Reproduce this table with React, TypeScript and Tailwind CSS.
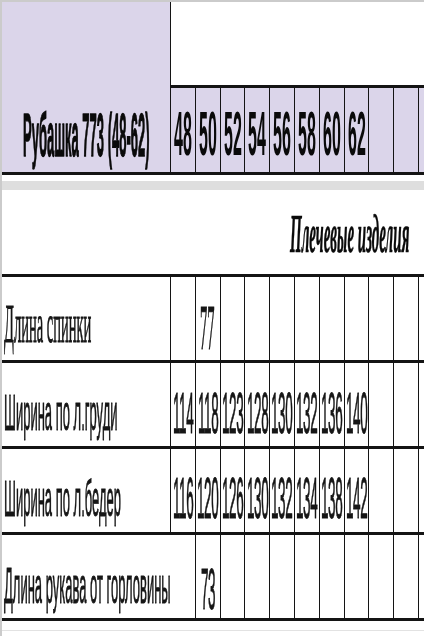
import React from "react"

type Row = {
  label: string
  serif?: boolean
  values: string[]
  valueOffset: string
  labelOffset: string
  openLabel?: boolean
}

const sizes = ["48", "50", "52", "54", "56", "58", "60", "62", "", ""]

const rows: Row[] = [
  {
    label: "Длина спинки",
    serif: true,
    values: ["", "77"],
    labelOffset: "pt-[12px]",
    valueOffset: "pt-[20px]",
  },
  {
    label: "Ширина по л.груди",
    values: ["114", "118", "123", "128", "130", "132", "136", "140"],
    labelOffset: "pt-[16px]",
    valueOffset: "pt-[21px]",
  },
  {
    label: "Ширина по л.бедер",
    values: ["116", "120", "126", "130", "132", "134", "138", "142"],
    labelOffset: "pt-[16px]",
    valueOffset: "pt-[19px]",
  },
  {
    label: "Длина рукава от горловины",
    values: ["", "73"],
    labelOffset: "pt-[17px]",
    valueOffset: "pt-[28px]",
    openLabel: true,
  },
]

const sans = "font-['Liberation_Sans',Arial,sans-serif]"
const serif = "font-['Liberation_Serif','Times_New_Roman',serif]"
// stretched text renders with grayscale smoothing on its own layer
const stretch = "inline-block whitespace-nowrap leading-none [will-change:transform]"

function DataRow({ row }: { row: Row }) {
  const cells = Array.from({ length: 10 }, (_, i) => row.values[i] ?? "")
  return (
    <div className="flex h-[86px] border-b-[3px] border-[#141414]">
      <div
        className={`flex w-[169px] shrink-0 items-center pl-[2px] ${row.labelOffset} ${
          row.openLabel ? "" : "border-r border-[#141414]"
        }`}
      >
        <span
          className={`${stretch} text-[#161616] [-webkit-text-stroke:0.25px_#161616] ${
            row.serif ? `${serif} text-[14.5px] scale-y-[3.8]` : `${sans} text-[13px] scale-y-[3.8]`
          }`}
        >
          {row.label}
        </span>
      </div>
      {cells.map((v, i) => (
        <div
          key={i}
          className={`flex w-[24.8px] shrink-0 items-center justify-center border-r border-[#141414] ${row.valueOffset}`}
        >
          {v && (
            <span
              className={`${stretch} text-[#161616] [-webkit-text-stroke:0.25px_#161616] ${
                row.serif
                  ? `${serif} text-[14.5px] scale-y-[4.4]`
                  : `${sans} text-[13.5px] tracking-[-0.4px] scale-y-[4.2]`
              }`}
            >
              {v}
            </span>
          )}
        </div>
      ))}
      <div className="flex-1" />
    </div>
  )
}

export default function App() {
  return (
    <div className={`h-[636px] w-[424px] overflow-hidden border-t-2 border-l-2 border-[#cbcbcb] bg-white ${sans}`}>
      {/* header */}
      <div className="flex border-b-[3px] border-[#141414]">
        <div className="flex h-[170px] w-[169px] shrink-0 items-end justify-center border-r border-[#141414] bg-[#dbd5ea] pb-[31px]">
          <span
            className={`${stretch} text-[13px] font-bold text-[#0a0a0a] [-webkit-text-stroke:0.3px_#0a0a0a] scale-y-[4.7]`}
          >
            Рубашка 773 (48-62)
          </span>
        </div>
        <div className="flex flex-1 flex-col">
          <div className="h-[86px] border-b-[3px] border-[#141414] bg-white" />
          <div className="flex h-[84px] bg-[#dbd5ea]">
            {sizes.map((s, i) => (
              <div
                key={i}
                className="flex w-[24.8px] shrink-0 items-center justify-center border-r border-[#141414] pt-[9px]"
              >
                {s && (
                  <span className={`${stretch} text-[16px] font-bold text-[#0a0a0a] scale-y-[3.9]`}>
                    {s}
                  </span>
                )}
              </div>
            ))}
            <div className="flex-1" />
          </div>
        </div>
      </div>

      {/* spacer with title */}
      <div className="mt-[6px] h-[9px] bg-[#dedede]" />
      <div className="flex h-[84px] items-start justify-end pr-[15px] pt-[38px] leading-none">
        <span
          className={`${stretch} ${serif} text-[15px] font-bold italic text-[#0a0a0a] [-webkit-text-stroke:0.2px_#0a0a0a] scale-y-[3.6]`}
        >
          Плечевые изделия
        </span>
      </div>

      {/* table */}
      <div className="border-t-[3px] border-[#141414]">
        {rows.map((r) => (
          <DataRow key={r.label} row={r} />
        ))}
      </div>
      <div className="mt-[9px] border-t border-[#e2e2e2]" />
    </div>
  )
}
